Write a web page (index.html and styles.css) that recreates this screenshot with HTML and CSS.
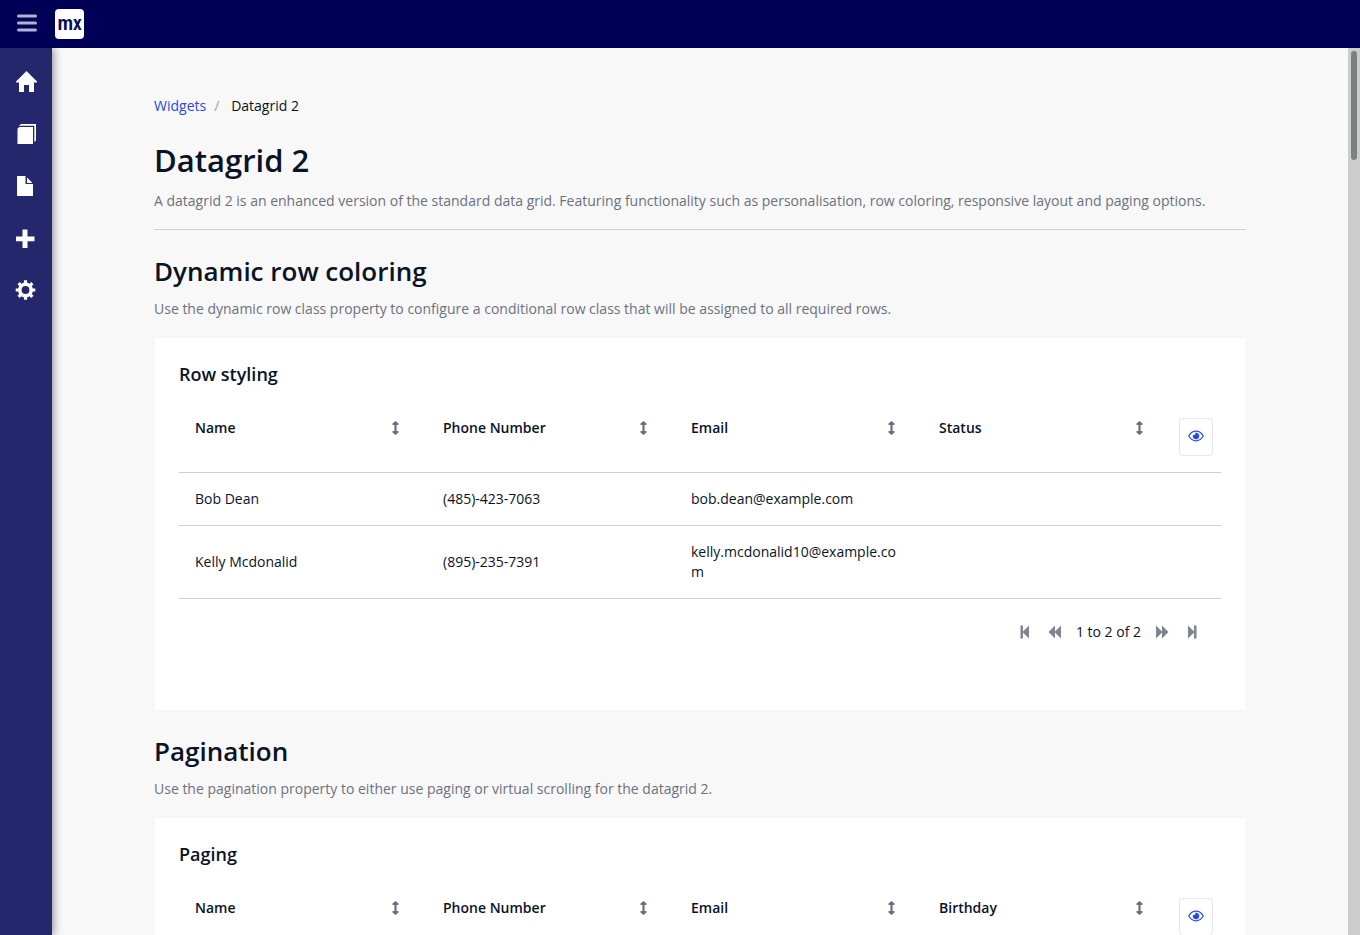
FILE: index.html
```html
<!DOCTYPE html>
<html lang="en">
<head>
<meta charset="utf-8">
<title>Datagrid 2</title>
<link rel="stylesheet" href="styles.css">
</head>
<body>
<svg class="defs" aria-hidden="true">
  <symbol id="sort" viewBox="0 0 7 14"><path d="M3.500 0L6.500 2.400V4H4.600V10H6.500V11.600L3.500 14L.5 11.600V10H2.400V4H.5V2.400Z"/></symbol>
  <symbol id="eye" viewBox="0 0 16 12"><path d="M.8 6Q3.500 1.200 8 1.200T15.200 6Q12.500 10.800 8 10.800T.8 6Z" fill="none" stroke="currentColor" stroke-width="1.200"/><path d="M8 2.700A3.300 3.300 0 1 1 4.900 5H6.600Q7.200 4.800 7.200 4.200V2.800Z"/></symbol>
  <symbol id="double" viewBox="0 0 14 14"><path d="M7 .5V6.500L13 .5V13.500L7 7.500V13.500L.5 7Z"/></symbol>
  <symbol id="edge" viewBox="0 0 10 14"><path d="M.5 .5H3V6.400L9 .5V13.500L3 7.600V13.500H.5Z"/></symbol>
</svg>
<header class="topbar">
  <button class="menu-toggle" aria-label="Toggle menu"><svg width="20" height="20" viewBox="0 0 20 20"><path d="M1.500 2H18.500M1.500 9H18.500M1.500 16H18.500" stroke="currentColor" stroke-width="3" stroke-linecap="round"/></svg></button>
  <a class="logo" href="#">mx</a>
</header>
<div class="shell">
  <nav class="sidebar">
    <a href="#" aria-label="Home"><svg class="nav-icon" viewBox="0 0 22 22"><path d="M11.500 0L22 10.500V11.500H19V21H14V14H9V21H4V11.500H1V10.500Z"/></svg></a>
    <a href="#" aria-label="Layouts"><svg class="nav-icon" viewBox="0 0 22 22"><path d="M2.500 5.500L4.500 4H18V21H2.500Z"/><path d="M3.500 3.200L6 1H21V17.500L19.300 19V2.700H5Z"/></svg></a>
    <a href="#" aria-label="Pages"><svg class="nav-icon" viewBox="0 0 22 22"><path d="M2 1H10.500V9H18V21H2Z"/><path d="M12 2.500L17.500 8H12Z"/></svg></a>
    <a href="#" aria-label="Widgets"><svg class="nav-icon" viewBox="0 0 22 22"><path d="M7.500 2.500H12.500V9.500H19.500V14.200H12.500V21H7.500V14.200H1V9.500H7.500Z"/></svg></a>
    <a href="#" aria-label="Settings"><svg class="nav-icon" viewBox="0 0 22 22"><circle cx="10.500" cy="11" r="5.700" fill="none" stroke="currentColor" stroke-width="3.600"/><path d="M10.500 1.200V5M10.500 17V20.800M.7 11H4.500M16.500 11H20.300M3.600 4.100L6.300 6.800M14.700 15.200L17.400 17.900M3.600 17.900L6.300 15.200M14.700 6.800L17.400 4.100" stroke="currentColor" stroke-width="3.200"/></svg></a>
  </nav>
  <main class="content">
    <div class="container">
      <nav class="breadcrumb" aria-label="Breadcrumb"><a href="#">Widgets</a><span class="slash">/</span><span>Datagrid 2</span></nav>
      <header class="page-header">
        <h1>Datagrid 2</h1>
        <p>A datagrid 2 is an enhanced version of the standard data grid. Featuring functionality such as personalisation, row coloring, responsive layout and paging options.</p>
      </header>
      <section class="section">
        <h2>Dynamic row coloring</h2>
        <p>Use the dynamic row class property to configure a conditional row class that will be assigned to all required rows.</p>
        <div class="card">
          <h3>Row styling</h3>
          <table class="grid">
            <colgroup><col><col><col><col><col class="selector-col"></colgroup>
            <thead><tr>
              <th><button class="sort">Name<svg><use href="#sort"/></svg></button></th>
              <th><button class="sort">Phone Number<svg><use href="#sort"/></svg></button></th>
              <th><button class="sort">Email<svg><use href="#sort"/></svg></button></th>
              <th><button class="sort">Status<svg><use href="#sort"/></svg></button></th>
              <th class="selector"><button class="eye" aria-label="Select columns"><svg><use href="#eye"/></svg></button></th>
            </tr></thead>
            <tbody>
              <tr><td>Bob Dean</td><td>(485)-423-7063</td><td>bob.dean@example.com</td><td></td><td></td></tr>
              <tr><td>Kelly Mcdonalid</td><td>(895)-235-7391</td><td>kelly.mcdonalid10@example.com</td><td></td><td></td></tr>
            </tbody>
          </table>
          <div class="pager">
            <button aria-label="First page"><svg class="edge"><use href="#edge"/></svg></button>
            <button aria-label="Previous page"><svg><use href="#double"/></svg></button>
            <span>1 to 2 of 2</span>
            <button aria-label="Next page"><svg class="flip"><use href="#double"/></svg></button>
            <button aria-label="Last page"><svg class="edge flip"><use href="#edge"/></svg></button>
          </div>
        </div>
      </section>
      <section class="section">
        <h2>Pagination</h2>
        <p>Use the pagination property to either use paging or virtual scrolling for the datagrid 2.</p>
        <div class="card">
          <h3>Paging</h3>
          <table class="grid">
            <colgroup><col><col><col><col><col class="selector-col"></colgroup>
            <thead><tr>
              <th><button class="sort">Name<svg><use href="#sort"/></svg></button></th>
              <th><button class="sort">Phone Number<svg><use href="#sort"/></svg></button></th>
              <th><button class="sort">Email<svg><use href="#sort"/></svg></button></th>
              <th><button class="sort">Birthday<svg><use href="#sort"/></svg></button></th>
              <th class="selector"><button class="eye" aria-label="Select columns"><svg><use href="#eye"/></svg></button></th>
            </tr></thead>
          </table>
        </div>
      </section>
    </div>
  </main>
  <div class="scroll-track" aria-hidden="true"><div class="scroll-thumb"></div></div>
</div>
</body>
</html>
```
FILE: styles.css
```css
* { box-sizing: border-box; }
body {
  margin: 0;
  height: 100vh;
  display: flex;
  flex-direction: column;
  overflow: hidden;
  background: #f8f8f8;
  color: #0a1325;
  font: 14px/20px "Open Sans", sans-serif;
}
button {
  padding: 0;
  border: 0;
  background: none;
  color: inherit;
  font: inherit;
  cursor: pointer;
}
a { color: #264ae5; text-decoration: none; }
svg { display: block; fill: currentColor; }
h1, h2, h3, p { margin: 0; font-weight: 600; }
.defs { display: none; }

.topbar {
  display: flex;
  flex: none;
  align-items: center;
  gap: 18px;
  height: 48px;
  padding-left: 17px;
  background: #000056;
}
.menu-toggle { color: #b2b2cc; }
.logo {
  display: flex;
  align-items: center;
  justify-content: center;
  width: 29px;
  height: 30px;
  border-radius: 4px;
  background: #fff;
  color: #0a0a57;
  font: 700 20px/28px "Liberation Sans Narrow", "Open Sans Condensed", "Roboto Condensed", Roboto, sans-serif;
  padding-bottom: 2px;
}

.shell { display: flex; flex: 1; min-height: 0; }
.sidebar {
  z-index: 1;
  flex: none;
  width: 52px;
  padding-top: 8px;
  background: #24276c;
  box-shadow: 2px 0 8px rgba(0, 0, 0, 0.4);
  clip-path: inset(0 -16px 0 0);
}
.sidebar a {
  display: flex;
  align-items: center;
  height: 52px;
  padding-left: 15px;
  color: #fff;
}
.nav-icon { width: 22px; height: 22px; }

.content { flex: 1; min-width: 0; overflow: hidden; }
.container { max-width: 1140px; margin: 0 auto; padding: 48px 24px; }
.scroll-track { flex: none; width: 12px; padding: 3px; background: #cdcdcd; }
.scroll-thumb { height: 109px; border-radius: 3px; background: #7c8280; }

.breadcrumb { display: flex; }
.slash { width: 25px; padding-left: 8px; color: #a0a4ab; }
.page-header {
  padding: 24px 0 17px;
  border-bottom: 1px solid #ced0d3;
}
.page-header h1 { margin-bottom: 10px; font-size: 31px; line-height: 40px; }
.page-header p, .section > p { color: #6c717e; font-weight: 400; line-height: 22px; }
.section { padding-top: 24px; }
.section h2 { margin-bottom: 10px; font-size: 26px; line-height: 34px; }
.card { margin: 18px 1px 0; padding: 24px; background: #fff; }
.card h3 { margin-bottom: 16px; font-size: 18px; line-height: 24px; }

.grid { width: 100%; table-layout: fixed; border-collapse: separate; border-spacing: 0; }
.selector-col { width: 50px; }
.grid th, .grid td {
  padding: 16px;
  border-bottom: 1px solid #ced0d3;
  text-align: left;
  overflow-wrap: anywhere;
}
.grid th { padding-right: 28px; vertical-align: top; }
.grid .selector { padding: 16px 8px; }
.sort {
  display: flex;
  align-items: center;
  justify-content: space-between;
  width: 100%;
  font-weight: 600;
}
.sort svg { width: 7px; height: 14px; color: #6c717e; }
.eye {
  display: flex;
  justify-content: center;
  width: 34px;
  height: 38px;
  padding-top: 11px;
  border: 1px solid #e7e7e9;
  border-radius: 4px;
  color: #264ae5;
}
.eye svg { width: 16px; height: 12px; }

.pager {
  display: flex;
  align-items: center;
  justify-content: flex-end;
  margin: 15px 0 36px;
  padding-right: 14px;
}
.pager button {
  display: flex;
  align-items: center;
  justify-content: center;
  width: 30px;
  height: 36px;
  color: #7f8490;
}
.pager span { margin: 0 6px; }
.pager svg { width: 14px; height: 14px; }
.pager .edge { width: 10px; }
.flip { transform: scaleX(-1); }
```
